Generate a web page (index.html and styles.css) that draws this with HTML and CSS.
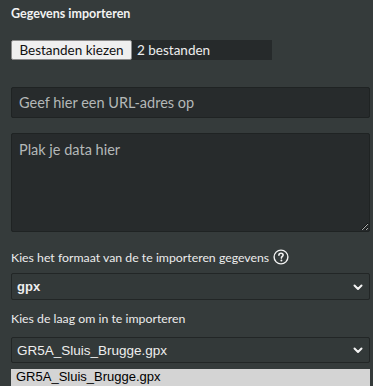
FILE: index.html
```html
<!DOCTYPE html>
<html lang="nl">
<head>
<meta charset="utf-8">
<title>Gegevens importeren</title>
<link rel="stylesheet" href="styles.css">
</head>
<body>
<div class="panel">
  <h3 class="title">Gegevens importeren</h3>
  <div class="file-row">
    <span class="file-btn">Bestanden kiezen</span>
    <span class="file-name">2 bestanden</span>
  </div>
  <input class="field url" type="text" placeholder="Geef hier een URL-adres op">
  <textarea class="field data" placeholder="Plak je data hier"></textarea>
  <div class="label">Kies het formaat van de te importeren gegevens
    <svg class="help" width="16" height="16" viewBox="0 0 16 16" aria-hidden="true">
      <circle cx="8" cy="8" r="6.9" fill="none" stroke="#f2f2f2" stroke-width="1.4"/>
      <path d="M5.9 6.2 C5.9 4.9 6.8 4.2 8 4.2 C9.2 4.2 10.1 4.9 10.1 6 C10.1 7.4 8.4 7.5 8.4 9.1" fill="none" stroke="#f2f2f2" stroke-width="1.6" stroke-linecap="round"/>
      <circle cx="8.4" cy="11.4" r="1" fill="#f2f2f2"/>
    </svg>
  </div>
  <div class="select fmt">gpx
    <svg class="chev" width="10" height="7" viewBox="0 0 10 7" aria-hidden="true"><path d="M1.5 1.5 L5 5 L8.5 1.5" fill="none" stroke="#f4f4f4" stroke-width="2" stroke-linecap="round" stroke-linejoin="round"/></svg>
  </div>
  <div class="label second">Kies de laag om in te importeren</div>
  <div class="select layer">GR5A_Sluis_Brugge.gpx
    <svg class="chev" width="10" height="7" viewBox="0 0 10 7" aria-hidden="true"><path d="M1.5 1.5 L5 5 L8.5 1.5" fill="none" stroke="#f4f4f4" stroke-width="2" stroke-linecap="round" stroke-linejoin="round"/></svg>
  </div>
  <div class="option">GR5A_Sluis_Brugge.gpx</div>
</div>
</body>
</html>
```

FILE: styles.css
```css
html, body {
  margin: 0;
  height: 100%;
  overflow: hidden;
}
body {
  background: #353b3b;
  font-family: Lato, "Noto Sans", sans-serif;
  color: #e6e6e6;
}
.panel {
  display: flex;
  flex-direction: column;
  padding: 6px 3px 0 11px;
}
.title {
  margin: 0;
  font-size: 12.5px;
  line-height: 16px;
  font-weight: 700;
  color: #f2f2f2;
}
.file-row {
  display: flex;
  align-items: center;
  width: 261px;
  height: 20px;
  margin-top: 18px;
  background: #262a2b;
}
.file-btn {
  box-sizing: border-box;
  height: 20px;
  width: 121px;
  display: flex;
  align-items: center;
  justify-content: center;
  white-space: nowrap;
  background: #efefef;
  border: 1px solid #8a8a8a;
  border-radius: 2px;
  color: #111;
  font-size: 13.5px;
}
.file-name {
  margin-left: 5px;
  font-size: 13.5px;
  white-space: nowrap;
  color: #eeeeee;
}
.field {
  box-sizing: border-box;
  width: 359px;
  margin: 0;
  background: #272b2c;
  border: 1px solid #1f2323;
  border-radius: 2px;
  color: #ddd;
  font-family: Lato, "Noto Sans", sans-serif;
  font-size: 14.5px;
  padding: 0 7px;
  outline: none;
  color-scheme: dark;
}
.field::placeholder {
  color: #b4b8b8;
}
.url {
  height: 31px;
  margin-top: 27px;
}
.data {
  height: 99px;
  margin-top: 15px;
  padding-top: 7px;
  resize: vertical;
  display: block;
}
.label {
  display: flex;
  align-items: center;
  gap: 4px;
  margin-top: 17px;
  height: 16px;
  font-size: 12.3px;
  color: #ececec;
  white-space: nowrap;
}
.help {
  flex: none;
}
.label.second {
  margin-top: 10px;
}
.select {
  position: relative;
  box-sizing: border-box;
  width: 359px;
  display: flex;
  align-items: center;
  padding: 0 5px;
  border: 1px solid #222626;
  border-radius: 2px;
  background: #333939;
  font-family: "Liberation Sans", Arial, sans-serif;
  color: #eeeeee;
  white-space: nowrap;
}
.select.fmt {
  margin-top: 8px;
  height: 27px;
  font-size: 13px;
  font-weight: 700;
}
.select.layer {
  margin-top: 11px;
  height: 26px;
  font-size: 13.5px;
}
.chev {
  position: absolute;
  right: 6px;
  top: 50%;
  margin-top: -3px;
}
.option {
  box-sizing: border-box;
  width: 359px;
  height: 17px;
  margin-top: 6px;
  padding: 0 5px;
  background: #d4d4d4;
  color: #000;
  font-family: "Liberation Sans", Arial, sans-serif;
  font-size: 13px;
  line-height: 16px;
  white-space: nowrap;
}
```
